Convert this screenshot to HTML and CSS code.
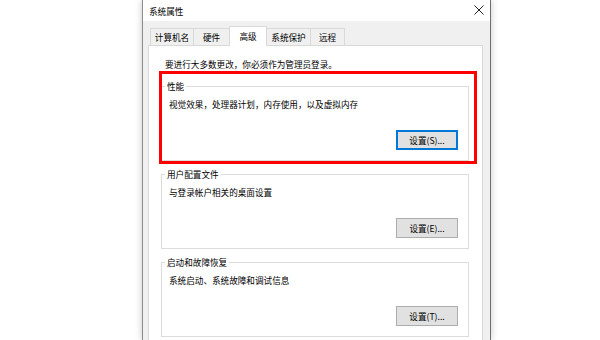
FILE: index.html
```html
<!DOCTYPE html>
<html lang="zh-CN">
<head>
  <meta charset="UTF-8">
  <title>系统属性</title>
  <link rel="stylesheet" href="styles.css">
</head>
<body>
  <div class="window">
    <div class="titlebar">
      <span class="title">系统属性</span>
      <svg class="close" width="10" height="10" viewBox="0 0 10 10">
        <path d="M0.5 0.5 L9.5 9.5 M9.5 0.5 L0.5 9.5" stroke="#222" stroke-width="1" fill="none"/>
      </svg>
    </div>

    <div class="dialog">
      <div class="tabs">
        <div class="tab tab-name">计算机名</div>
        <div class="tab tab-hw">硬件</div>
        <div class="tab tab-adv active">高级</div>
        <div class="tab tab-prot">系统保护</div>
        <div class="tab tab-remote">远程</div>
      </div>

      <div class="panel">
        <p class="note">要进行大多数更改，你必须作为管理员登录。</p>

        <fieldset class="group">
          <legend>性能</legend>
          <p class="desc">视觉效果，处理器计划，内存使用，以及虚拟内存</p>
          <div class="actions"><button class="btn focused">设置(S)...</button></div>
        </fieldset>

        <fieldset class="group">
          <legend>用户配置文件</legend>
          <p class="desc">与登录帐户相关的桌面设置</p>
          <div class="actions"><button class="btn">设置(E)...</button></div>
        </fieldset>

        <fieldset class="group">
          <legend>启动和故障恢复</legend>
          <p class="desc">系统启动、系统故障和调试信息</p>
          <div class="actions"><button class="btn">设置(T)...</button></div>
        </fieldset>

        <!-- 红色标注框 -->
        <div class="highlight"></div>
      </div>
    </div>
  </div>
</body>
</html>
```

FILE: styles.css
```css
body { margin: 0; height: 340px; overflow: hidden; background: #fff; font-family: "Noto Sans CJK SC", "Noto Sans", sans-serif; font-size: 8.6px; color: #000; }

.window { margin-left: 142px; width: 347px; height: 340px; overflow: hidden; background: #f0f0f0; border-left: 1px solid #8c8c8c; border-right: 1px solid #6f6f6f; box-shadow: 0 0 7px rgba(0, 0, 0, 0.22); }

.titlebar { height: 21px; background: #fff; display: flex; justify-content: space-between; align-items: center; padding: 0 6px 0 6px; }
.title { line-height: 12px; margin-top: 1px; }
.close { align-self: flex-start; margin-top: 5px; }

.dialog { padding: 5px 7px 0 5px; }

.tabs { display: flex; align-items: flex-end; height: 19px; padding-left: 2px; }
.tab { height: 16px; line-height: 16px; text-align: center; background: #f0f0f0; border: 1px solid #d9d9d9; border-bottom: none; margin-right: -1px; }
.tab.active { height: 19px; line-height: 18px; background: #fff; margin-bottom: -1px; position: relative; z-index: 1; }
.tab-name { width: 42px; }
.tab-hw { width: 35px; }
.tab-adv { width: 36px; }
.tab-prot { width: 43px; }
.tab-remote { width: 33px; }

.panel { position: relative; height: 300px; background: #fff; border: 1px solid #d9d9d9; padding: 12px 0 0 0; }

.note { margin: 0 0 9px 16px; line-height: 13px; }

.group { margin: 0 0 7px 12px; width: 293px; padding: 0 10px 10px 3px; border: 1px solid #dcdcdc; }
.group legend { padding: 0 2px; line-height: 12px; }
.desc { margin: 6px 0 0 4px; line-height: 12px; }
.actions { display: flex; justify-content: flex-end; margin-top: 20px; }

.btn { width: 62px; height: 20px; padding: 0; font-family: inherit; font-size: 8.6px; color: #000; background: #e1e1e1; border: 1px solid #adadad; }
.btn.focused { border: 2px solid #0078d7; }

.highlight { position: absolute; left: 10px; top: 25px; width: 312px; height: 87px; border: 3px solid #ff0000; }
```
